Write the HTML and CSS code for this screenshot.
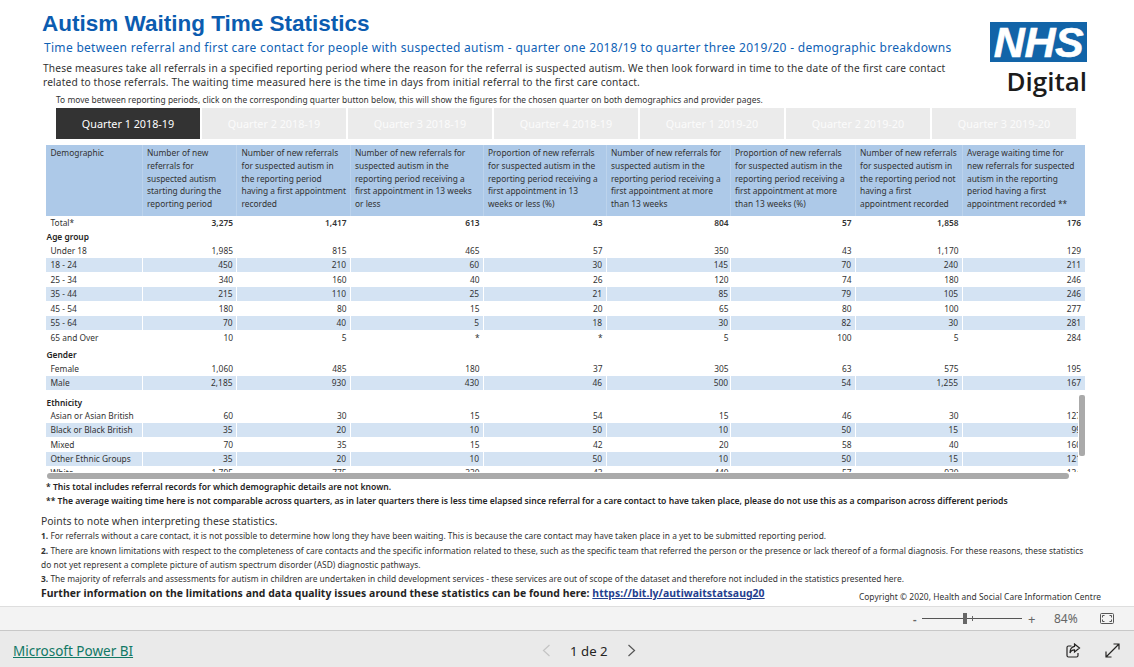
FILE: index.html
```html
<!DOCTYPE html>
<html lang="en">
<head>
    <meta charset="UTF-8">
    <meta name="viewport" content="width=device-width, initial-scale=1.0">
    <title>Autism Waiting Time Statistics</title>
    <link rel="stylesheet" href="styles.css">
</head>
<body>
    <main class="report">
        <header class="report-head">
            <div class="head-text">
                <h1>Autism Waiting Time Statistics</h1>
                <h2>Time between referral and first care contact for people with suspected autism - quarter one 2018/19 to quarter three 2019/20 - demographic breakdowns</h2>
                <p class="intro">These measures take all referrals in a specified reporting period where the reason for the referral is suspected autism. We then look forward in time to the date of the first care contact<br>related to those referrals. The waiting time measured here is the time in days from initial referral to the first care contact.</p>
            </div>
            <div class="logo">
                <div class="logo-box">NHS</div>
                <div class="logo-word">Digital</div>
            </div>
        </header>

        <p class="hint">To move between reporting periods, click on the corresponding quarter button below, this will show the figures for the chosen quarter on both demographics and provider pages.</p>

        <nav class="tabs">
            <button class="tab active">Quarter 1 2018-19</button>
            <button class="tab">Quarter 2 2018-19</button>
            <button class="tab">Quarter 3 2018-19</button>
            <button class="tab">Quarter 4 2018-19</button>
            <button class="tab">Quarter 1 2019-20</button>
            <button class="tab">Quarter 2 2019-20</button>
            <button class="tab">Quarter 3 2019-20</button>
        </nav>

        <div class="table-wrap">
            <table class="stats">
                <colgroup>
                    <col class="c0"><col class="c1"><col class="c2"><col class="c3"><col class="c4"><col class="c5"><col class="c6"><col class="c7"><col class="c8">
                </colgroup>
                <thead>
                    <tr>
                        <th>Demographic</th>
                        <th>Number of new<br>referrals for<br>suspected autism<br>starting during the<br>reporting period</th>
                        <th>Number of new referrals<br>for suspected autism in<br>the reporting period<br>having a first appointment<br>recorded</th>
                        <th>Number of new referrals for<br>suspected autism in the<br>reporting period receiving a<br>first appointment in 13 weeks<br>or less</th>
                        <th>Proportion of new referrals<br>for suspected autism in the<br>reporting period receiving a<br>first appointment in 13<br>weeks or less (%)</th>
                        <th>Number of new referrals for<br>suspected autism in the<br>reporting period receiving a<br>first appointment at more<br>than 13 weeks</th>
                        <th>Proportion of new referrals<br>for suspected autism in the<br>reporting period receiving a<br>first appointment at more<br>than 13 weeks (%)</th>
                        <th>Number of new referrals<br>for suspected autism in<br>the reporting period not<br>having a first<br>appointment recorded</th>
                        <th>Average waiting time for<br>new referrals for suspected<br>autism in the reporting<br>period having a first<br>appointment recorded **</th>
                    </tr>
                </thead>
                <tbody>
                    <tr class="total"><td>Total*</td><td>3,275</td><td>1,417</td><td>613</td><td>43</td><td>804</td><td>57</td><td>1,858</td><td>176</td></tr>
                    <tr class="group"><td colspan="9">Age group</td></tr>
                    <tr><td>Under 18</td><td>1,985</td><td>815</td><td>465</td><td>57</td><td>350</td><td>43</td><td>1,170</td><td>129</td></tr>
                    <tr class="band"><td>18 - 24</td><td>450</td><td>210</td><td>60</td><td>30</td><td>145</td><td>70</td><td>240</td><td>211</td></tr>
                    <tr class="wide"><td>25 - 34</td><td>340</td><td>160</td><td>40</td><td>26</td><td>120</td><td>74</td><td>180</td><td>246</td></tr>
                    <tr class="band"><td>35 - 44</td><td>215</td><td>110</td><td>25</td><td>21</td><td>85</td><td>79</td><td>105</td><td>246</td></tr>
                    <tr class="wide"><td>45 - 54</td><td>180</td><td>80</td><td>15</td><td>20</td><td>65</td><td>80</td><td>100</td><td>277</td></tr>
                    <tr class="band"><td>55 - 64</td><td>70</td><td>40</td><td>5</td><td>18</td><td>30</td><td>82</td><td>30</td><td>281</td></tr>
                    <tr class="wide"><td>65 and Over</td><td>10</td><td>5</td><td>*</td><td>*</td><td>5</td><td>100</td><td>5</td><td>284</td></tr>
                    <tr class="group gender"><td colspan="9">Gender</td></tr>
                    <tr class="wide"><td>Female</td><td>1,060</td><td>485</td><td>180</td><td>37</td><td>305</td><td>63</td><td>575</td><td>195</td></tr>
                    <tr class="band"><td>Male</td><td>2,185</td><td>930</td><td>430</td><td>46</td><td>500</td><td>54</td><td>1,255</td><td>167</td></tr>
                    <tr class="group ethnicity"><td colspan="9">Ethnicity</td></tr>
                    <tr><td>Asian or Asian British</td><td>60</td><td>30</td><td>15</td><td>54</td><td>15</td><td>46</td><td>30</td><td>127</td></tr>
                    <tr class="band"><td>Black or Black British</td><td>35</td><td>20</td><td>10</td><td>50</td><td>10</td><td>50</td><td>15</td><td>99</td></tr>
                    <tr class="wide"><td>Mixed</td><td>70</td><td>35</td><td>15</td><td>42</td><td>20</td><td>58</td><td>40</td><td>160</td></tr>
                    <tr class="band"><td>Other Ethnic Groups</td><td>35</td><td>20</td><td>10</td><td>50</td><td>10</td><td>50</td><td>15</td><td>121</td></tr>
                    <tr><td>White</td><td>1,795</td><td>775</td><td>330</td><td>43</td><td>440</td><td>57</td><td>930</td><td>134</td></tr>
                </tbody>
            </table>
            <div class="v-track"><div class="v-thumb"></div></div>
        </div>
        <div class="h-scroll"></div>

        <p class="foot foot-first">* This total includes referral records for which demographic details are not known.</p>
        <p class="foot">** The average waiting time here is not comparable across quarters, as in later quarters there is less time elapsed since referral for a care contact to have taken place, please do not use this as a comparison across different periods</p>

        <section class="notes">
            <h3>Points to note when interpreting these statistics.</h3>
            <p><b>1.</b> For referrals without a care contact, it is not possible to determine how long they have been waiting. This is because the care contact may have taken place in a yet to be submitted reporting period.</p>
            <p class="note-two"><b>2.</b> There are known limitations with respect to the completeness of care contacts and the specific information related to these, such as the specific team that referred the person or the presence or lack thereof of a formal diagnosis. For these reasons, these statistics<br>do not yet represent a complete picture of autism spectrum disorder (ASD) diagnostic pathways.</p>
            <p><b>3.</b> The majority of referrals and assessments for autism in children are undertaken in child development services - these services are out of scope of the dataset and therefore not included in the statistics presented here.</p>
            <div class="further">
                <strong>Further information on the limitations and data quality issues around these statistics can be found here: <a href="#">https://bit.ly/autiwaitstatsaug20</a></strong>
                <span class="copyright">Copyright © 2020, Health and Social Care Information Centre</span>
            </div>
        </section>
    </main>

    <div class="zoom-bar">
        <span class="zoom-minus">-</span>
        <div class="slider"><span class="slider-tick"></span><span class="slider-thumb"></span></div>
        <span class="zoom-plus">+</span>
        <span class="zoom-val">84%</span>
        <svg class="fit-icon" width="14" height="11" viewBox="0 0 14 11" fill="none" stroke="#555" stroke-width="1">
            <rect x="0.5" y="0.5" width="13" height="10" rx="1"/>
            <path d="M4.5 2.5H2.5V4.5M9.5 2.5H11.5V4.5M4.5 8.5H2.5V6.5M9.5 8.5H11.5V6.5"/>
        </svg>
    </div>

    <footer class="nav-bar">
        <a class="brand" href="#">Microsoft Power BI</a>
        <div class="pager">
            <svg width="9" height="13" viewBox="0 0 9 13" fill="none" stroke="#c4c4c4" stroke-width="1.2"><path d="M7.5 1L1.5 6.5L7.5 12"/></svg>
            <span class="page-label">1 de 2</span>
            <svg width="9" height="13" viewBox="0 0 9 13" fill="none" stroke="#555" stroke-width="1.2"><path d="M1.5 1L7.5 6.5L1.5 12"/></svg>
        </div>
        <div class="nav-icons">
            <svg width="15" height="15" viewBox="0 0 15 15" fill="none" stroke="#252423" stroke-width="1.2">
                <path d="M5.5 3H2.5Q1 3 1 4.5V12.5Q1 14 2.5 14H10.5Q12 14 12 12.5V10"/>
                <path d="M8.5 1L13.5 5L8.5 9V6.8Q5 6.8 4 10Q4 4.2 8.5 3.4Z"/>
            </svg>
            <svg width="15" height="15" viewBox="0 0 15 15" fill="none" stroke="#252423" stroke-width="1.2">
                <path d="M1 14L14 1M8.5 1H14V6.5M1 8.5V14H6.5"/>
            </svg>
        </div>
    </footer>
</body>
</html>
```

FILE: styles.css
```css
* {
    box-sizing: border-box;
}
html, body {
    margin: 0;
    height: 100%;
}
body {
    width: 1134px;
    height: 667px;
    overflow: hidden;
    display: flex;
    flex-direction: column;
    background-color: white;
    color: #252423;
    font-family: "Noto Sans", "Open Sans", sans-serif;
}
.report {
    height: 606px;
    padding-top: 11px;
    overflow: hidden;
}
.report-head {
    display: flex;
    height: 82px;
    padding-left: 42px;
}
.head-text {
    width: 948px;
}
h1 {
    margin: 0;
    height: 26px;
    font-family: "Liberation Sans", sans-serif;
    font-size: 22.5px;
    line-height: 26px;
    font-weight: bold;
    color: #0b5cb0;
}
h2 {
    margin: 3px 0 0 2px;
    height: 16px;
    font-size: 12px;
    line-height: 16px;
    font-weight: normal;
    letter-spacing: 0.3px;
    white-space: nowrap;
    color: #0f62b5;
}
.intro {
    margin: 5px 0 0 1px;
    font-size: 10.2px;
    line-height: 14px;
    letter-spacing: 0.155px;
    white-space: nowrap;
    color: #333;
}
.logo {
    width: 97px;
    margin-top: 11px;
}
.logo-box {
    height: 40px;
    background-color: #1264a8;
    color: white;
    font-family: "Liberation Sans", sans-serif;
    font-size: 43px;
    line-height: 40px;
    font-weight: bold;
    font-style: italic;
    text-align: center;
    letter-spacing: -0.5px;
    -webkit-text-stroke: 0.6px white;
}
.logo-word {
    margin-top: 4px;
    font-family: "Open Sans", sans-serif;
    font-size: 26px;
    line-height: 30px;
    font-weight: 600;
    text-align: right;
    color: #1b1b1b;
}
.hint {
    margin: 0 0 0 56px;
    height: 15px;
    font-size: 8.4px;
    line-height: 14px;
    letter-spacing: 0.04px;
    white-space: nowrap;
    color: #333;
}
.tabs {
    display: flex;
    gap: 2px;
    margin-left: 56px;
    width: 1020px;
    height: 31px;
}
.tab {
    flex: 1;
    padding: 0;
    border: none;
    background-color: #ebebeb;
    color: #fbfbfb;
    font-family: inherit;
    font-size: 10.8px;
}
.tab.active {
    background-color: #333;
    color: white;
}
.table-wrap {
    position: relative;
    margin: 6px 0 0 46px;
    width: 1039px;
    height: 327px;
    overflow: hidden;
}
.stats {
    width: 1038.5px;
    table-layout: fixed;
    border-collapse: collapse;
    font-size: 8.4px;
    color: #333;
}
.c0 { width: 96px; }
.c1 { width: 94.5px; }
.c2 { width: 113.5px; }
.c3 { width: 133px; }
.c4 { width: 123px; }
.c5 { width: 124px; }
.c6 { width: 125px; }
.c7 { width: 107px; }
.c8 { width: 122.5px; }
.stats th {
    height: 71px;
    padding: 2px 0 0 4.5px;
    background-color: #adc9e8;
    border-left: 1px solid #bcd3ec;
    vertical-align: top;
    text-align: left;
    font-weight: normal;
    line-height: 12.8px;
    white-space: nowrap;
}
.stats th:first-child {
    border-left: none;
}
.stats td {
    height: 14px;
    padding: 0 3.5px 0 0;
    line-height: 12px;
    text-align: right;
    white-space: nowrap;
}
.stats td:first-child {
    padding-left: 4.5px;
    text-align: left;
}
.stats td:nth-child(6) {
    padding-right: 1.5px;
}
.stats tr.wide td {
    height: 15px;
}
.band td {
    background-color: #d4e3f3;
    border-left: 1px solid white;
}
.band td:first-child {
    border-left: none;
}
.total td {
    font-weight: 600;
}
.total td:first-child {
    font-weight: normal;
}
.stats .group td {
    padding-left: 0.5px;
    text-align: left;
    font-weight: 600;
    color: #252423;
}
.stats .gender td {
    height: 16px;
    padding-top: 3px;
}
.stats .ethnicity td {
    height: 18px;
    padding-top: 7px;
}
.v-track {
    position: absolute;
    top: 247px;
    right: 0;
    bottom: 0;
    width: 7px;
    background-color: white;
}
.v-thumb {
    width: 6px;
    height: 61px;
    margin: 3px 0 0 1px;
    border-radius: 2px;
    background-color: #aaa;
}
.h-scroll {
    width: 1022px;
    height: 6px;
    margin: 1px 0 0 47px;
    border-radius: 3px;
    background-color: #aaa;
}
.foot {
    margin: 0 0 0 46px;
    height: 14px;
    font-size: 8.6px;
    line-height: 14px;
    font-weight: 600;
    white-space: nowrap;
    color: #252423;
}
.foot-first {
    margin-top: 1px;
}
.notes {
    margin: 6px 0 0 41px;
    font-size: 8.4px;
    line-height: 14px;
    letter-spacing: 0.02px;
    color: #333;
}
.notes h3 {
    margin: 0;
    font-size: 10.4px;
    line-height: 15px;
    font-weight: normal;
    letter-spacing: 0;
    color: #333;
}
.notes p {
    margin: 0;
    white-space: nowrap;
}
.notes .note-two {
    padding-top: 1px;
}
.further {
    display: flex;
    justify-content: space-between;
    align-items: flex-end;
    width: 1060px;
    height: 14px;
}
.further strong {
    font-size: 10.4px;
    line-height: 14px;
    letter-spacing: 0.07px;
    white-space: nowrap;
    color: #252423;
}
.further a {
    color: #24408e;
}
.copyright {
    font-size: 8.4px;
    line-height: 10px;
    letter-spacing: 0.04px;
    white-space: nowrap;
    margin-bottom: -2px;
}
.zoom-bar {
    display: flex;
    align-items: center;
    height: 25px;
    padding-left: 913px;
    background-color: #f3f3f3;
    border-top: 1px solid #dedede;
    border-bottom: 1px solid #c8c8c8;
    color: #666;
    font-size: 11px;
}
.zoom-minus {
    width: 9px;
    font-weight: bold;
}
.slider {
    position: relative;
    width: 100px;
    height: 1px;
    background-color: #555;
}
.slider-thumb {
    position: absolute;
    left: 41px;
    top: -5px;
    width: 4px;
    height: 11px;
    background-color: #666;
}
.slider-tick {
    position: absolute;
    left: 50px;
    top: -2px;
    width: 1px;
    height: 5px;
    background-color: #666;
}
.zoom-plus {
    width: 14px;
    margin-left: 6px;
    font-size: 13px;
}
.zoom-val {
    width: 26px;
    margin-left: 12px;
    font-size: 12px;
}
.fit-icon {
    margin-left: 20px;
}
.nav-bar {
    flex: 1;
    display: flex;
    align-items: center;
    padding: 3px 14px 0 13px;
    background-color: #eaeaea;
}
.brand {
    font-size: 13.5px;
    color: #117865;
}
.pager {
    display: flex;
    align-items: center;
    margin-left: 409px;
    gap: 19px;
}
.page-label {
    font-size: 13.2px;
    color: #252423;
}
.nav-icons {
    display: flex;
    gap: 24px;
    margin-left: auto;
}
```
